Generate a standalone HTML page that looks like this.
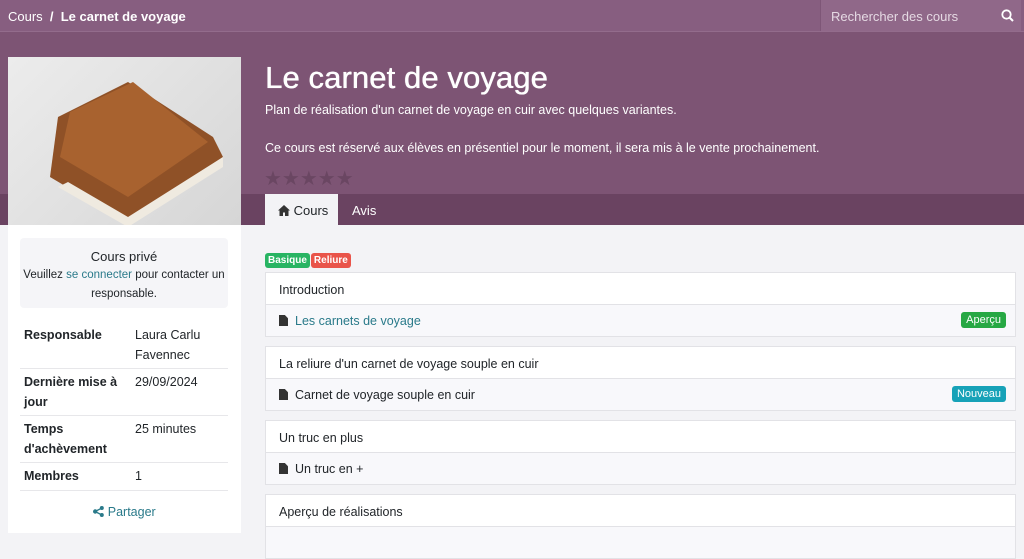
<!DOCTYPE html>
<html><head><meta charset="utf-8"><style>
*{box-sizing:border-box;margin:0;padding:0}
body{width:1024px;height:533px;overflow:hidden;background:#f3f3f6;font-family:"Liberation Sans",sans-serif;color:#212529;font-size:13px;position:relative}
.top{position:absolute;left:0;top:0;width:1024px;height:32px;background:#875e80;border-bottom:1px solid #936c8c}
.bc{position:absolute;left:8px;top:9px;color:#fff;font-size:13px}
.search{position:absolute;left:820px;top:0;width:201px;height:31px;background:#906889;border-left:1px solid #7e5677}
.search span{position:absolute;left:10px;top:9px;color:#e5d9e3;font-size:13px}
.hdr{position:absolute;left:0;top:32px;width:1024px;height:162px;background:#7d5474}
.band{position:absolute;left:0;top:194px;width:1024px;height:31px;background:#6a4361}
.img{position:absolute;left:8px;top:57px;width:233px;height:168px;background:linear-gradient(135deg,#ececec,#d6d6d6)}
h1{position:absolute;left:265px;top:60px;color:#fff;font-size:31px;font-weight:normal;letter-spacing:.1px;text-shadow:0 0 .6px #fff,.4px 0 0 #fff}
.p1,.p2{position:absolute;left:265px;color:#fff;font-size:12.5px}
.p1{top:103px}.p2{top:141px}
.stars{position:absolute;left:264px;top:166px;color:#6a4662;font-size:20px;letter-spacing:0px}
.tab{position:absolute;top:194px;height:31px;font-size:13px;padding-top:9px}
.side{position:absolute;left:8px;top:225px;width:233px;height:308px;background:#fff}
.priv{position:absolute;left:12px;top:13px;width:208px;height:70px;background:#f5f5f8;border-radius:4px;text-align:center;font-size:11.5px;line-height:19px;padding-top:9px}
.priv b{font-weight:normal;font-size:13px;display:block;margin-bottom:0}
a{color:#2a7a8a;text-decoration:none}
table{position:absolute;left:12px;top:97px;width:208px;border-collapse:collapse;font-size:12.5px;line-height:19.5px}
td{vertical-align:top;padding:4px 4px 3px;border-bottom:1px solid #e7e7ea}
td:first-child{font-weight:bold;width:111px}
.share{position:absolute;left:0;width:233px;top:280px;text-align:center;color:#2a7a8a;font-size:12.5px}
.tags{position:absolute;left:265px;top:251px}
.tg{display:inline-block;color:#fff;font-size:10px;font-weight:bold;padding:2px 3px;border-radius:3px;margin-right:1px}
.sec{position:absolute;left:265px;width:751px;border:1px solid #e2e2e6;background:#fff}
.sh{height:32px;padding:10px 13px;font-size:12.5px;border-bottom:1px solid #e2e2e6}
.it{height:31px;padding:9px 13px;background:#f8f8fb;font-size:12.5px;position:relative}
.ic{display:inline-block;width:9px;height:11px;background:#333;margin-right:7px;vertical-align:-1px;clip-path:polygon(0 0,65% 0,100% 30%,100% 100%,0 100%)}
.bd{position:absolute;right:9px;top:7px;color:#fff;font-size:11px;padding:2px 5px;border-radius:3px}
</style></head><body>
<div class="top"><div class="bc">Cours &nbsp;<b>/&nbsp; Le carnet de voyage</b></div>
<div class="search"><span>Rechercher des cours</span>
<svg style="position:absolute;right:7px;top:9px" width="13" height="13" viewBox="0 0 13 13"><circle cx="5.5" cy="5.5" r="4.2" fill="none" stroke="#fff" stroke-width="1.8"/><line x1="8.5" y1="8.5" x2="12" y2="12" stroke="#fff" stroke-width="2"/></svg></div></div>
<div class="hdr"></div><div class="band"></div>
<div class="img"><svg width="233" height="168" viewBox="0 0 233 168"><polygon points="50,60 120,25 205,80 215,100 118,165 42,120" fill="#8f5127"/><polygon points="62,55 125,25 200,85 120,140 52,100" fill="#a8622f"/><polygon points="60,125 120,160 215,100 215,110 120,170 50,130" fill="#efeae0"/></svg></div>
<h1>Le carnet de voyage</h1>
<div class="p1">Plan de réalisation d'un carnet de voyage en cuir avec quelques variantes.</div>
<div class="p2">Ce cours est réservé aux élèves en présentiel pour le moment, il sera mis à le vente prochainement.</div>
<div class="stars">★★★★★</div>
<div class="tab" style="left:265px;width:73px;background:#f3f3f6;padding-left:13px"><svg width="12" height="11" viewBox="0 0 12 11" style="vertical-align:-1px"><path d="M6 0L0 5.5h1.5V11h3.5V7.5h2V11h3.5V5.5H12z" fill="#333"/></svg> Cours</div>
<div class="tab" style="left:352px;color:#fff">Avis</div>
<div class="side">
<div class="priv"><b>Cours privé</b>Veuillez <a>se connecter</a> pour contacter un responsable.</div>
<table>
<tr><td>Responsable</td><td>Laura Carlu Favennec</td></tr>
<tr><td>Dernière mise à jour</td><td>29/09/2024</td></tr>
<tr><td>Temps d'achèvement</td><td>25 minutes</td></tr>
<tr><td>Membres</td><td>1</td></tr>
</table>
<div class="share"><svg width="11" height="11" viewBox="0 0 11 11" style="vertical-align:-1px"><circle cx="2.2" cy="5.5" r="2.2" fill="#2a7a8a"/><circle cx="8.8" cy="2" r="2" fill="#2a7a8a"/><circle cx="8.8" cy="9" r="2" fill="#2a7a8a"/><path d="M2 5.5L9 2M2 5.5L9 9" stroke="#2a7a8a" stroke-width="1.3"/></svg> Partager</div>
</div>
<div class="tags"><span class="tg" style="background:#28b463">Basique</span><span class="tg" style="background:#e9544a">Reliure</span></div>
<div class="sec" style="top:272px"><div class="sh">Introduction</div><div class="it"><span class="ic"></span><a>Les carnets de voyage</a><span class="bd" style="background:#27a844">Aperçu</span></div></div>
<div class="sec" style="top:346px"><div class="sh">La reliure d'un carnet de voyage souple en cuir</div><div class="it"><span class="ic"></span>Carnet de voyage souple en cuir<span class="bd" style="background:#17a2b8">Nouveau</span></div></div>
<div class="sec" style="top:420px"><div class="sh">Un truc en plus</div><div class="it"><span class="ic"></span>Un truc en +</div></div>
<div class="sec" style="top:494px"><div class="sh">Aperçu de réalisations</div><div class="it"></div></div>
</body></html>
